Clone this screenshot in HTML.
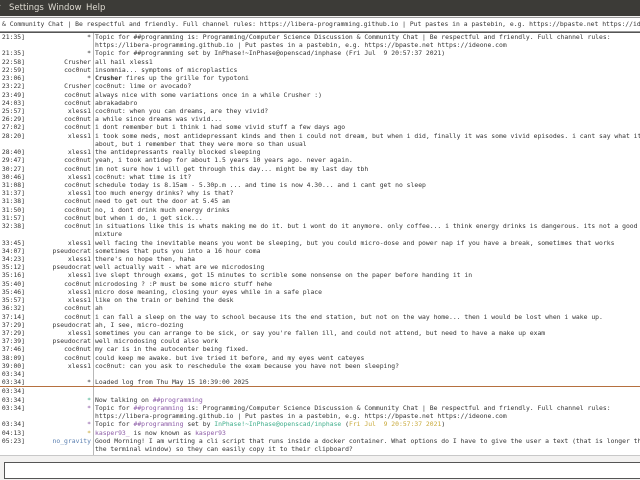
<!DOCTYPE html>
<html><head><meta charset="utf-8"><style>
*{margin:0;padding:0;box-sizing:border-box}
body{width:640px;height:480px;overflow:hidden;background:#f2f1f0;position:relative;font-family:"DejaVu Sans Mono","Liberation Mono",monospace;}
#menu{position:absolute;left:0;top:0;width:640px;height:16px;background:#3c3b37;color:#dfdbd2;font-family:"DejaVu Sans","Liberation Sans",sans-serif;font-size:8.5px;line-height:16px;white-space:nowrap}
#menu span{position:absolute;top:0}
#topic{position:absolute;left:-2px;top:17px;width:644px;height:15px;background:#fff;border:1px solid #9a9a9a;font-size:6.4px;line-height:13px;color:#333;white-space:nowrap;padding-left:3px}
#chat{position:absolute;left:-2px;top:32px;width:644px;height:424px;background:#fff;border-top:1px solid #555;border-bottom:1px solid #c8c8c8}
#sep{position:absolute;left:93px;top:33px;width:1px;height:422px;background:#b8b8b8}
.r{position:absolute;left:0;height:8.22px;font-size:6.4px;line-height:8.22px;color:#333;white-space:nowrap}
.t{position:absolute;left:-6px;width:31px;text-align:right}
.n{position:absolute;right:-91px;width:70px;text-align:right}
.m{position:absolute;left:95px}
.b{font-weight:bold}
#marker{position:absolute;left:0;top:386px;width:640px;height:1px;background:#b5703f}
#input{position:absolute;left:4px;top:462px;width:640px;height:17px;background:#fff;border:1px solid #555}
.p{color:#8b5aa6}.g{color:#3fae8b}.y{color:#c8a93a}
</style></head><body>
<div id="menu"><span style="left:-3px">r</span><span style="left:9px">Settings</span><span style="left:48px">Window</span><span style="left:86px">Help</span></div>
<div id="topic">&amp; Community Chat | Be respectful and friendly. Full channel rules: https://libera-programming.github.io | Put pastes in a pastebin, e.g. https://bpaste.net https://ideone.com</div>
<div id="chat"></div>
<div id="sep"></div>
<div id="marker"></div>
<div id="input"></div>
<div style="position:absolute;left:0;top:0">
<div class="r" style="top:33px"><span class="t">21:35]</span><span class="n" style="left:21px">*</span><span class="m">Topic for ##programming is: Programming/Computer Science Discussion &amp; Community Chat | Be respectful and friendly. Full channel rules:</span></div>
<div class="r" style="top:41.2px"><span class="m">https://libera-programming.github.io | Put pastes in a pastebin, e.g. https://bpaste.net https://ideone.com</span></div>
<div class="r" style="top:49.4px"><span class="t">21:35]</span><span class="n" style="left:21px">*</span><span class="m">Topic for ##programming set by InPhase!~InPhase@openscad/inphase (Fri Jul &nbsp;9 20:57:37 2021)</span></div>
<div class="r" style="top:57.7px"><span class="t">22:58]</span><span class="n" style="left:21px">Crusher</span><span class="m">all hail xless1</span></div>
<div class="r" style="top:65.9px"><span class="t">22:59]</span><span class="n" style="left:21px">coc0nut</span><span class="m">insomnia... symptoms of microplastics</span></div>
<div class="r" style="top:74.1px"><span class="t">23:06]</span><span class="n" style="left:21px">*</span><span class="m"><b>Crusher</b> fires up the grille for typotoni</span></div>
<div class="r" style="top:82.3px"><span class="t">23:22]</span><span class="n" style="left:21px">Crusher</span><span class="m">coc0nut: lime or avocado?</span></div>
<div class="r" style="top:90.5px"><span class="t">23:49]</span><span class="n" style="left:21px">coc0nut</span><span class="m">always nice with some variations once in a while Crusher :)</span></div>
<div class="r" style="top:98.8px"><span class="t">24:03]</span><span class="n" style="left:21px">coc0nut</span><span class="m">abrakadabro</span></div>
<div class="r" style="top:107px"><span class="t">25:57]</span><span class="n" style="left:21px">xless1</span><span class="m">coc0nut: when you can dreams, are they vivid?</span></div>
<div class="r" style="top:115.2px"><span class="t">26:29]</span><span class="n" style="left:21px">coc0nut</span><span class="m">a while since dreams was vivid...</span></div>
<div class="r" style="top:123.4px"><span class="t">27:02]</span><span class="n" style="left:21px">coc0nut</span><span class="m">i dont remember but i think i had some vivid stuff a few days ago</span></div>
<div class="r" style="top:131.6px"><span class="t">28:20]</span><span class="n" style="left:21px">xless1</span><span class="m">i took some meds, most antidepressant kinds and then i could not dream, but when i did, finally it was some vivid episodes. i cant say what it was</span></div>
<div class="r" style="top:139.8px"><span class="m">about, but i remember that they were more so than usual</span></div>
<div class="r" style="top:148.1px"><span class="t">28:40]</span><span class="n" style="left:21px">xless1</span><span class="m">the antidepressants really blocked sleeping</span></div>
<div class="r" style="top:156.3px"><span class="t">29:47]</span><span class="n" style="left:21px">coc0nut</span><span class="m">yeah, i took antidep for about 1.5 years 10 years ago. never again.</span></div>
<div class="r" style="top:164.5px"><span class="t">30:27]</span><span class="n" style="left:21px">coc0nut</span><span class="m">im not sure how i will get through this day... might be my last day tbh</span></div>
<div class="r" style="top:172.7px"><span class="t">30:46]</span><span class="n" style="left:21px">xless1</span><span class="m">coc0nut: what time is it?</span></div>
<div class="r" style="top:180.9px"><span class="t">31:08]</span><span class="n" style="left:21px">coc0nut</span><span class="m">schedule today is 8.15am - 5.30p.m ... and time is now 4.30... and i cant get no sleep</span></div>
<div class="r" style="top:189.2px"><span class="t">31:37]</span><span class="n" style="left:21px">xless1</span><span class="m">too much energy drinks? why is that?</span></div>
<div class="r" style="top:197.4px"><span class="t">31:38]</span><span class="n" style="left:21px">coc0nut</span><span class="m">need to get out the door at 5.45 am</span></div>
<div class="r" style="top:205.6px"><span class="t">31:50]</span><span class="n" style="left:21px">coc0nut</span><span class="m">no, i dont drink much energy drinks</span></div>
<div class="r" style="top:213.8px"><span class="t">31:57]</span><span class="n" style="left:21px">coc0nut</span><span class="m">but when i do, i get sick...</span></div>
<div class="r" style="top:222px"><span class="t">32:38]</span><span class="n" style="left:21px">coc0nut</span><span class="m">in situations like this is whats making me do it. but i wont do it anymore. only coffee... i think energy drinks is dangerous. its not a good</span></div>
<div class="r" style="top:230.3px"><span class="m">mixture</span></div>
<div class="r" style="top:238.5px"><span class="t">33:45]</span><span class="n" style="left:21px">xless1</span><span class="m">well facing the inevitable means you wont be sleeping, but you could micro-dose and power nap if you have a break, sometimes that works</span></div>
<div class="r" style="top:246.7px"><span class="t">34:07]</span><span class="n" style="left:21px">pseudocrat</span><span class="m">sometimes that puts you into a 16 hour coma</span></div>
<div class="r" style="top:254.9px"><span class="t">34:23]</span><span class="n" style="left:21px">xless1</span><span class="m">there's no hope then, haha</span></div>
<div class="r" style="top:263.1px"><span class="t">35:12]</span><span class="n" style="left:21px">pseudocrat</span><span class="m">well actually wait - what are we microdosing</span></div>
<div class="r" style="top:271.4px"><span class="t">35:16]</span><span class="n" style="left:21px">xless1</span><span class="m">ive slept through exams, got 15 minutes to scrible some nonsense on the paper before handing it in</span></div>
<div class="r" style="top:279.6px"><span class="t">35:40]</span><span class="n" style="left:21px">coc0nut</span><span class="m">microdosing ? :P must be some micro stuff hehe</span></div>
<div class="r" style="top:287.8px"><span class="t">35:46]</span><span class="n" style="left:21px">xless1</span><span class="m">micro dose meaning, closing your eyes while in a safe place</span></div>
<div class="r" style="top:296px"><span class="t">35:57]</span><span class="n" style="left:21px">xless1</span><span class="m">like on the train or behind the desk</span></div>
<div class="r" style="top:304.2px"><span class="t">36:32]</span><span class="n" style="left:21px">coc0nut</span><span class="m">ah</span></div>
<div class="r" style="top:312.5px"><span class="t">37:14]</span><span class="n" style="left:21px">coc0nut</span><span class="m">i can fall a sleep on the way to school because its the end station, but not on the way home... then i would be lost when i wake up.</span></div>
<div class="r" style="top:320.7px"><span class="t">37:29]</span><span class="n" style="left:21px">pseudocrat</span><span class="m">ah, I see, micro-dozing</span></div>
<div class="r" style="top:328.9px"><span class="t">37:29]</span><span class="n" style="left:21px">xless1</span><span class="m">sometimes you can arrange to be sick, or say you're fallen ill, and could not attend, but need to have a make up exam</span></div>
<div class="r" style="top:337.1px"><span class="t">37:39]</span><span class="n" style="left:21px">pseudocrat</span><span class="m">well microdosing could also work</span></div>
<div class="r" style="top:345.3px"><span class="t">37:46]</span><span class="n" style="left:21px">coc0nut</span><span class="m">my car is in the autocenter being fixed.</span></div>
<div class="r" style="top:353.6px"><span class="t">38:09]</span><span class="n" style="left:21px">coc0nut</span><span class="m">could keep me awake. but ive tried it before, and my eyes went cateyes</span></div>
<div class="r" style="top:361.8px"><span class="t">39:00]</span><span class="n" style="left:21px">xless1</span><span class="m">coc0nut: can you ask to reschedule the exam because you have not been sleeping?</span></div>
<div class="r" style="top:370px"><span class="t">03:34]</span></div>
<div class="r" style="top:378.2px"><span class="t">03:34]</span><span class="n" style="left:21px">*</span><span class="m">Loaded log from Thu May 15 10:39:00 2025</span></div>
<div class="r" style="top:387.4px"><span class="t">03:34]</span></div>
<div class="r" style="top:395.6px"><span class="t">03:34]</span><span class="n g" style="left:21px">*</span><span class="m">Now talking on <span class="p">##programming</span></span></div>
<div class="r" style="top:403.8px"><span class="t">03:34]</span><span class="n p" style="left:21px">*</span><span class="m">Topic for <span class="p">##programming</span> is: Programming/Computer Science Discussion &amp; Community Chat | Be respectful and friendly. Full channel rules:</span></div>
<div class="r" style="top:412px"><span class="m">https://libera-programming.github.io | Put pastes in a pastebin, e.g. https://bpaste.net https://ideone.com</span></div>
<div class="r" style="top:420.3px"><span class="t">03:34]</span><span class="n p" style="left:21px">*</span><span class="m">Topic for <span class="p">##programming</span> set by <span class="g">InPhase!~InPhase@openscad/inphase</span> (<span class="y">Fri Jul &nbsp;9 20:57:37 2021</span>)</span></div>
<div class="r" style="top:428.5px"><span class="t">04:13]</span><span class="n y" style="left:21px">*</span><span class="m"><span class="p">kasper93_</span> is now known as <span class="p">kasper93</span></span></div>
<div class="r" style="top:436.7px"><span class="t">05:23]</span><span class="n" style="left:21px;color:#5a7fb0">no_gravity</span><span class="m">Good Morning! I am writing a cli script that runs inside a docker container. What options do I have to give the user a text (that is longer than</span></div>
<div class="r" style="top:444.9px"><span class="m">the terminal window) so they can easily copy it to their clipboard?</span></div>
</div>
</body></html>
